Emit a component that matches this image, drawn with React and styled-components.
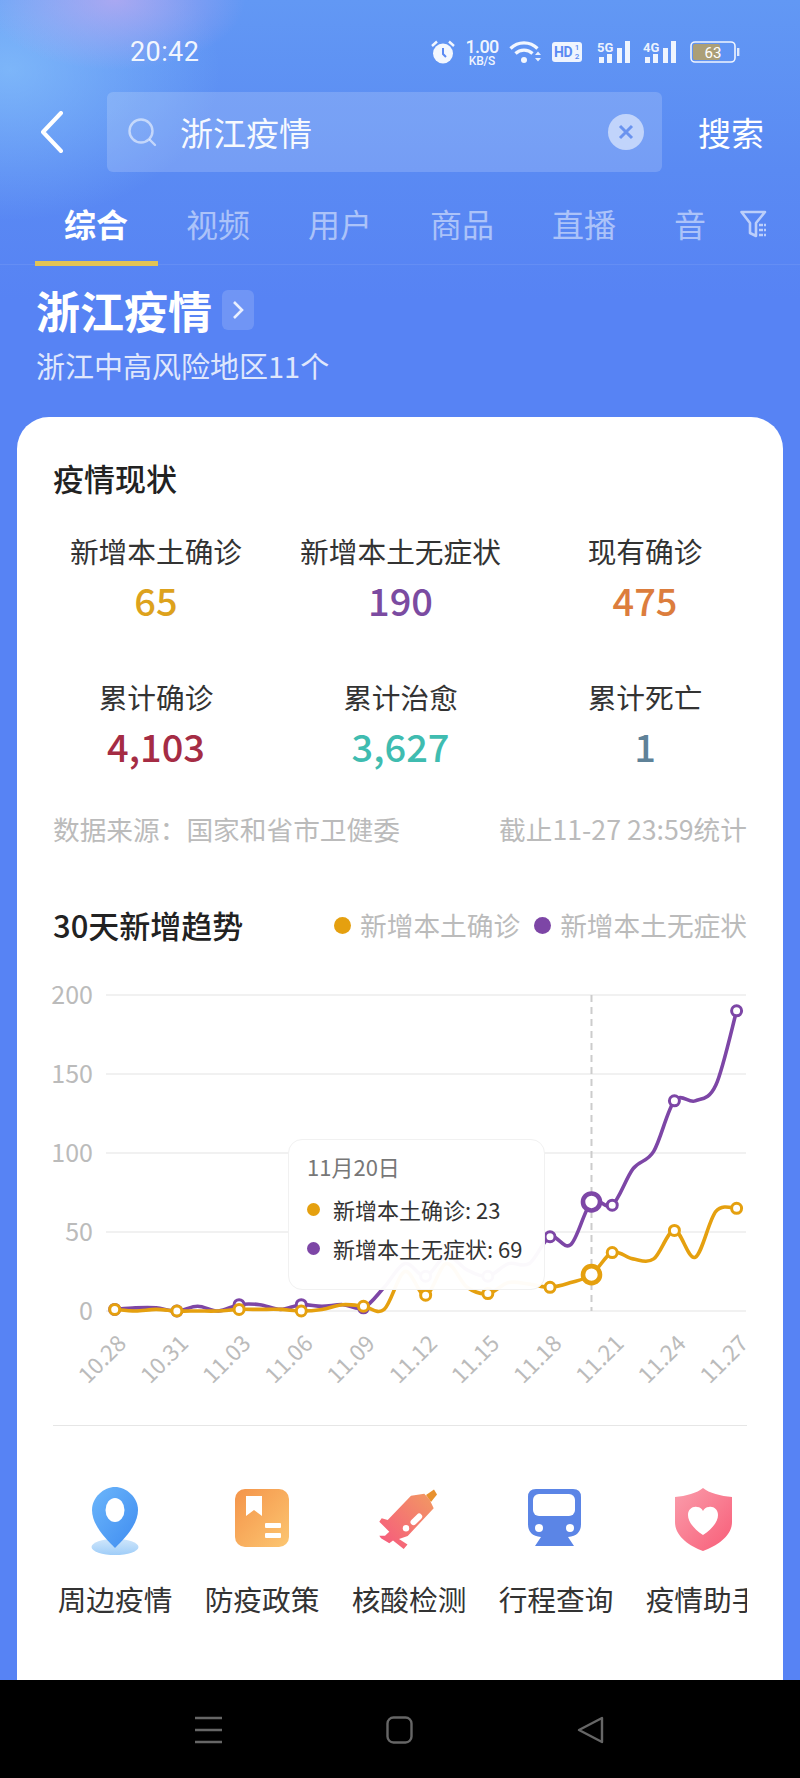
import React from 'react';
import styled, { createGlobalStyle } from 'styled-components';

const GlobalStyle = createGlobalStyle`
  html, body { margin: 0; padding: 0; background: #000; }
  * { box-sizing: border-box; }
  body { font-family: "Noto Sans CJK SC", "Noto Sans", sans-serif; }
`;

const Page = styled.div`
  width: 800px;
  height: 1778px;
  display: flex;
  flex-direction: column;
  overflow: hidden;
`;

const Screen = styled.div`
  flex: 1;
  min-height: 0;
  overflow: hidden;
  background:
    radial-gradient(ellipse 130px 70px at 115px 0px, rgba(190, 170, 240, 0.75), rgba(190, 170, 240, 0) 100%),
    radial-gradient(ellipse 210px 150px at 10px 70px, rgba(140, 200, 252, 0.65), rgba(140, 200, 252, 0) 100%),
    linear-gradient(180deg, #6298f4 0%, #5a8af3 170px, #5783f4 300px, #5783f4 100%);
`;

/* status bar */
const StatusBar = styled.div`
  height: 92px;
  padding: 12px 60px 0 130px;
  display: flex;
  align-items: center;
  color: rgba(255, 255, 255, 0.92);
`;

const Time = styled.div`
  font-family: Roboto, sans-serif;
  font-size: 27px;
  letter-spacing: 0.4px;
`;

const StatusIcons = styled.div`
  margin-left: auto;
  display: flex;
  align-items: center;
  gap: 10px;
`;

const Speed = styled.div`
  width: 34px;
  display: flex;
  flex-direction: column;
  align-items: center;
  font-family: Roboto, sans-serif;
  font-weight: 500;
  b {
    font-size: 18px;
    line-height: 17px;
    font-weight: 500;
    letter-spacing: -0.7px;
  }
  span {
    font-size: 12px;
    line-height: 12px;
    letter-spacing: -0.2px;
  }
`;

const HdBadge = styled.div`
  position: relative;
  width: 30px;
  height: 20px;
  border-radius: 3px;
  background: rgba(255, 255, 255, 0.9);
  color: #5a8af3;
  font-family: Roboto, sans-serif;
  font-weight: 700;
  font-size: 14px;
  line-height: 20px;
  padding-left: 2px;
  letter-spacing: -0.5px;
  span {
    position: absolute;
    right: 2px;
    top: 1px;
    width: 6px;
    font-size: 8px;
    line-height: 9px;
    font-weight: 500;
    text-align: center;
    letter-spacing: 0;
  }
`;

const SignalSvg = styled.svg`
  display: block;
  width: 35px;
  height: 24px;
  margin-left: ${(p) => p.$gap}px;
`;

const BatterySvg = styled.svg`
  display: block;
  width: 50px;
  height: 22px;
  margin-left: 2px;
`;

/* search */
const SearchRow = styled.div`
  height: 80px;
  padding-left: 40px;
  display: flex;
  align-items: center;
`;

const BackIcon = styled.svg`
  width: 24px;
  height: 42px;
  margin-right: 43px;
  flex: none;
`;

const SearchBox = styled.div`
  width: 555px;
  height: 80px;
  border-radius: 6px;
  background: rgba(255, 255, 255, 0.17);
  display: flex;
  align-items: center;
  padding: 0 18px 0 21px;
`;

const SearchText = styled.div`
  flex: 1;
  margin-left: 23px;
  font-size: 33px;
  color: rgba(255, 255, 255, 0.95);
`;

const SearchButton = styled.div`
  margin-left: 36px;
  font-size: 33px;
  color: #fff;
`;

/* tabs */
const TabBar = styled.div`
  height: 93px;
  padding: 29px 33px 0 64px;
  display: flex;
  justify-content: space-between;
  align-items: flex-start;
  border-bottom: 1px solid rgba(255, 255, 255, 0.08);
`;

const TabList = styled.div`
  display: flex;
  gap: 58px;
`;

const Tab = styled.div`
  position: relative;
  font-size: 32px;
  line-height: 44px;
  font-weight: ${(p) => (p.$active ? 700 : 400)};
  color: ${(p) => (p.$active ? '#fff' : 'rgba(255, 255, 255, 0.5)')};
  ${(p) =>
    p.$active &&
    `&::after {
      content: '';
      position: absolute;
      left: -29px;
      right: -30px;
      top: 60px;
      height: 5px;
      background: #e2c455;
    }`}
`;

const FilterIcon = styled.svg`
  display: block;
  width: 27px;
  height: 30px;
  margin-top: 9px;
`;

/* heading */
const TitleRow = styled.div`
  margin-top: 17px;
  padding-left: 36px;
  height: 56px;
  display: flex;
  align-items: center;
  gap: 10px;
`;

const Title = styled.h1`
  margin: 0;
  font-size: 44px;
  line-height: 56px;
  font-weight: 700;
  color: #fff;
`;

const TitleArrow = styled.div`
  width: 32px;
  height: 40px;
  border-radius: 6px;
  background: rgba(255, 255, 255, 0.15);
  display: flex;
  align-items: center;
  justify-content: center;
`;

const Subtitle = styled.div`
  margin-top: 7px;
  padding-left: 36px;
  font-size: 29px;
  line-height: 40px;
  color: rgba(255, 255, 255, 0.82);
`;

/* card */
const Card = styled.div`
  margin: 32px 17px 0;
  padding: 41px 36px 0;
  height: 1263px;
  background: #fff;
  border-radius: 32px 32px 0 0;
`;

const SectionTitle = styled.div`
  font-size: ${(p) => p.$size}px;
  line-height: 40px;
  font-weight: 500;
  color: #222;
`;

const StatGrid = styled.div`
  margin-top: 33px;
  display: grid;
  grid-template-columns: repeat(3, 206px);
  column-gap: 38.5px;
  row-gap: 52px;
`;

const Stat = styled.div`
  display: flex;
  flex-direction: column;
  align-items: center;
  white-space: nowrap;
`;

const StatLabel = styled.div`
  font-size: 28.7px;
  line-height: 40px;
  color: #333;
`;

const StatValue = styled.div`
  margin-top: 4px;
  font-size: 38px;
  line-height: 50px;
  font-weight: 500;
  color: ${(p) => p.$color};
`;

const SourceRow = styled.div`
  margin-top: 40px;
  display: flex;
  justify-content: space-between;
  font-size: 26.7px;
  line-height: 36px;
  color: #bbb;
  white-space: nowrap;
`;

const TrendHead = styled.div`
  margin-top: 58px;
  display: flex;
  align-items: center;
  justify-content: space-between;
`;

const Legend = styled.div`
  display: flex;
  gap: 14px;
`;

const LegendItem = styled.div`
  display: flex;
  align-items: center;
  gap: 9px;
  font-size: 26.7px;
  line-height: 36px;
  color: #bbb;
  white-space: nowrap;
`;

const Dot = styled.i`
  display: block;
  flex: none;
  width: ${(p) => p.$size}px;
  height: ${(p) => p.$size}px;
  border-radius: 50%;
  background: ${(p) => p.$color};
`;

const ChartWrap = styled.div`
  position: relative;
  margin-top: 25px;
  height: 430px;
`;

const ChartSvg = styled.svg`
  display: block;
  width: 694px;
  height: 430px;
  overflow: visible;
  font-family: "Noto Sans CJK SC", sans-serif;
`;

const Tooltip = styled.div`
  position: absolute;
  left: 235px;
  top: 169px;
  width: 257px;
  height: 151px;
  padding: 11px 0 0 18px;
  border: 1px solid #f1f1f1;
  border-radius: 14px;
  background: rgba(255, 255, 255, 0.97);
`;

const TipDate = styled.div`
  font-size: 22px;
  line-height: 30px;
  color: #777;
`;

const TipRow = styled.div`
  margin-top: ${(p) => p.$gap}px;
  display: flex;
  align-items: center;
  gap: 13px;
  font-size: 22px;
  line-height: 30px;
  color: #333;
  white-space: nowrap;
`;

const Divider = styled.div`
  margin-top: 25px;
  height: 1px;
  background: #e6e6e6;
`;

const Shortcuts = styled.div`
  margin-top: 60px;
  padding-left: 4px;
  display: flex;
  gap: 31px;
  overflow: hidden;
`;

const Shortcut = styled.div`
  flex: none;
  width: 116px;
  display: flex;
  flex-direction: column;
  align-items: center;
`;

const ShortcutIcon = styled.svg`
  width: 68px;
  height: 70px;
  display: block;
`;

const ShortcutLabel = styled.div`
  margin-top: 23px;
  font-size: 28.7px;
  line-height: 40px;
  color: #333;
  white-space: nowrap;
`;

/* nav */
const NavBar = styled.div`
  flex: none;
  height: 98px;
  background: #000;
  display: grid;
  grid-template-columns: 27px 27px 27px;
  column-gap: 164px;
  padding: 36px 0 0 195px;
`;

const NavIcon = styled.svg`
  width: 27px;
  height: 28px;
  display: block;
`;

const ORANGE = '#e5a00f';
const PURPLE = '#7d46a6';

const purpleData = [1, 2, 2, 0, 3, 0, 4, 4, 1, 4, 3, 4, 2, 15, 30, 22, 35, 26, 22, 30, 30, 47, 42, 69, 67, 90, 101, 133, 133, 143, 190];
const orangeData = [1, 0, 1, 0, 0, 0, 1, 1, 1, 0, 1, 4, 3, 1, 25, 10, 30, 15, 11, 18, 17, 15, 18, 23, 37, 33, 33, 51, 34, 63, 65];
const xLabels = ['10.28', '10.31', '11.03', '11.06', '11.09', '11.12', '11.15', '11.18', '11.21', '11.24', '11.27'];

const px = (i) => 61.7 + i * 20.73;
const py = (v) => 341 - v * 1.58;

// 把数据点连成平滑曲线
function smoothPath(data) {
  const pts = data.map((v, i) => [px(i), py(v)]);
  let d = `M${pts[0][0]} ${pts[0][1]}`;
  for (let i = 0; i < pts.length - 1; i++) {
    const p0 = pts[Math.max(i - 1, 0)];
    const p1 = pts[i];
    const p2 = pts[i + 1];
    const p3 = pts[Math.min(i + 2, pts.length - 1)];
    const c1x = p1[0] + (p2[0] - p0[0]) / 6;
    const c1y = p1[1] + (p2[1] - p0[1]) / 6;
    const c2x = p2[0] - (p3[0] - p1[0]) / 6;
    const c2y = p2[1] - (p3[1] - p1[1]) / 6;
    d += ` C${c1x} ${c1y} ${c2x} ${c2y} ${p2[0]} ${p2[1]}`;
  }
  return d;
}

function Series({ data, color }) {
  return (
    <g>
      <path d={smoothPath(data)} fill="none" stroke={color} strokeWidth="3.6" />
      {data.map((v, i) =>
        i % 3 === 0 ? (
          <circle key={i} cx={px(i)} cy={py(v)} r="5" fill="#fff" stroke={color} strokeWidth="3" />
        ) : null
      )}
      <circle cx={px(23)} cy={py(data[23])} r="8.5" fill="#fff" stroke={color} strokeWidth="4.6" />
    </g>
  );
}

function Chart() {
  return (
    <ChartSvg viewBox="0 0 694 430">
      {[200, 150, 100, 50, 0].map((v) => (
        <g key={v}>
          <line x1="53" x2="693" y1={py(v)} y2={py(v)} stroke="#ececec" strokeWidth="1.5" />
          <text x="40" y={py(v) + 9} textAnchor="end" fontSize="25" fill="#bbb">
            {v}
          </text>
        </g>
      ))}
      <line x1={px(23)} x2={px(23)} y1={py(200)} y2={py(0)} stroke="#ccc" strokeWidth="2" strokeDasharray="7 5" />
      <Series data={purpleData} color={PURPLE} />
      <Series data={orangeData} color={ORANGE} />
      {xLabels.map((t, i) => (
        <text
          key={t}
          transform={`translate(${px(i * 3) + 13} ${375}) rotate(-45)`}
          textAnchor="end"
          fontSize="22.5"
          fill="#bbb"
        >
          {t}
        </text>
      ))}
    </ChartSvg>
  );
}

function PinIcon() {
  return (
    <ShortcutIcon viewBox="0 0 68 70">
      <defs>
        <linearGradient id="pinG" x1="0" y1="0" x2="1" y2="1">
          <stop offset="0" stopColor="#6cb6fb" />
          <stop offset="1" stopColor="#3f8cf0" />
        </linearGradient>
        <linearGradient id="pinB" x1="0" y1="0" x2="0" y2="1">
          <stop offset="0" stopColor="#cfe6fb" />
          <stop offset="1" stopColor="#9fcdf8" />
        </linearGradient>
      </defs>
      <ellipse cx="34" cy="61" rx="23.5" ry="8" fill="url(#pinB)" />
      <path d="M34 1C23 1 11 11 11 24C11 39 25 53 34 62C43 53 57 39 57 24C57 11 45 1 34 1Z" fill="url(#pinG)" />
      <ellipse cx="34" cy="24" rx="9.5" ry="12" fill="#fff" />
    </ShortcutIcon>
  );
}

function BookIcon() {
  return (
    <ShortcutIcon viewBox="0 0 68 70">
      <defs>
        <linearGradient id="bookG" x1="0" y1="0" x2="1" y2="1">
          <stop offset="0" stopColor="#f4944a" />
          <stop offset="1" stopColor="#fcc671" />
        </linearGradient>
      </defs>
      <rect x="7" y="3" width="54" height="58" rx="10" fill="url(#bookG)" />
      <path d="M18 10H34V30L26 24L18 30Z" fill="#fff" />
      <rect x="37" y="37" width="16" height="5" rx="1" fill="#fff" />
      <rect x="37" y="47" width="16" height="5" rx="1" fill="#fff" />
    </ShortcutIcon>
  );
}

function SyringeIcon() {
  return (
    <ShortcutIcon viewBox="0 0 68 70">
      <defs>
        <linearGradient id="syrG" x1="0" y1="1" x2="1" y2="0">
          <stop offset="0" stopColor="#f6577f" />
          <stop offset="1" stopColor="#f29a62" />
        </linearGradient>
      </defs>
      <path d="M51 9L59 3.5L62 8.5L56 16Z" fill="#e8912e" />
      <path
        d="M36 9.7L49.3 7.7L54.3 13L58.7 22.3L32.7 50L24 53L32.5 58.5L28.7 63L18 54.5L14.3 57.3L6 52.3L4.3 49.7L10 49.7L14.3 45.7L4.3 35.7L6.7 32.3L12.7 34Z"
        fill="url(#syrG)"
      />
      <rect x="34" y="30.5" width="14" height="6" rx="3" transform="rotate(-45 41 33)" fill="#fff" />
      <circle cx="31" cy="42.3" r="3.2" fill="#fff" />
    </ShortcutIcon>
  );
}

function TrainIcon() {
  return (
    <ShortcutIcon viewBox="0 0 68 70">
      <path d="M14 3H51Q59 3 59 11V38Q59 50 46 51L52 60H13L19 51Q6 50 6 38V11Q6 3 14 3Z" fill="#5b85e6" />
      <rect x="11" y="8" width="42" height="22" rx="6" fill="#fff" />
      <circle cx="17" cy="42" r="4" fill="#fff" />
      <circle cx="48" cy="42" r="4" fill="#fff" />
    </ShortcutIcon>
  );
}

function ShieldIcon() {
  return (
    <ShortcutIcon viewBox="0 0 68 70">
      <defs>
        <linearGradient id="shG" x1="0" y1="0" x2="1" y2="1">
          <stop offset="0" stopColor="#fa9dab" />
          <stop offset="1" stopColor="#f85d78" />
        </linearGradient>
      </defs>
      <path d="M34 2C40 7 52 10 63 11V36C63 50 48 60 34 65C20 60 6 50 6 36V11C17 10 28 7 34 2Z" fill="url(#shG)" />
      <path d="M34 49C25 43 19 36 19 29C19 23 24 20 28 21C31 21 33 23 34 25C35 23 37 21 40 21C44 20 49 23 49 29C49 36 43 43 34 49Z" fill="#fff" />
    </ShortcutIcon>
  );
}

function Signal({ label, gap }) {
  const fill = 'rgba(255,255,255,.9)';
  return (
    <SignalSvg viewBox="0 0 35 24" $gap={gap}>
      <text x="0" y="12" fontSize="13" fontWeight="700" fontFamily="Roboto, sans-serif" fill={fill}>
        {label}
      </text>
      <rect x="2" y="17" width="5" height="6" fill={fill} />
      <rect x="10" y="14" width="5" height="9" fill={fill} />
      <rect x="20" y="8" width="5" height="15" fill={fill} />
      <rect x="28" y="1" width="5" height="22" fill={fill} />
    </SignalSvg>
  );
}

const stats = [
  { label: '新增本土确诊', value: '65', color: '#dda21d' },
  { label: '新增本土无症状', value: '190', color: '#7b4ba1' },
  { label: '现有确诊', value: '475', color: '#dc7d3d' },
  { label: '累计确诊', value: '4,103', color: '#a52c44' },
  { label: '累计治愈', value: '3,627', color: '#3fbcb0' },
  { label: '累计死亡', value: '1', color: '#5f8298' },
];

const shortcuts = [
  { label: '周边疫情', Icon: PinIcon },
  { label: '防疫政策', Icon: BookIcon },
  { label: '核酸检测', Icon: SyringeIcon },
  { label: '行程查询', Icon: TrainIcon },
  { label: '疫情助手', Icon: ShieldIcon },
];

export default function App() {
  return (
    <Page>
      <GlobalStyle />
      <Screen>
        <StatusBar>
          <Time>20:42</Time>
          <StatusIcons>
            <svg width="24" height="24" viewBox="0 0 24 24">
              <circle cx="12" cy="13.5" r="10" fill="rgba(255,255,255,.92)" />
              <path d="M12 8V14L15 17" fill="none" stroke="#5a8af3" strokeWidth="2" />
              <path d="M1 6L6 1.5M23 6L18 1.5" stroke="rgba(255,255,255,.92)" strokeWidth="2.4" />
            </svg>
            <Speed>
              <b>1.00</b>
              <span>KB/S</span>
            </Speed>
            <svg width="33" height="24" viewBox="0 0 33 24">
              <g fill="none" stroke="rgba(255,255,255,.92)" strokeWidth="3.2">
                <path d="M1.5 8.5C9 1 21 1 28.5 8.5" />
                <path d="M6.5 13.5C11 9 19 9 23.5 13.5" />
              </g>
              <circle cx="15" cy="20" r="3" fill="rgba(255,255,255,.92)" />
              <path d="M26 15L29 11.5L32 15ZM26 18L29 21.5L32 18Z" fill="rgba(255,255,255,.85)" />
            </svg>
            <HdBadge>
              HD
              <span>1 2</span>
            </HdBadge>
            <Signal label="5G" gap={5} />
            <Signal label="4G" gap={1} />
            <BatterySvg viewBox="0 0 50 22">
              <rect x="1" y="1" width="44" height="20" rx="4" fill="none" stroke="rgba(255,255,255,.9)" strokeWidth="1.6" />
              <rect x="3" y="3" width="27" height="16" rx="2" fill="#ab9f77" />
              <rect x="47" y="7" width="2.4" height="8" fill="rgba(255,255,255,.8)" />
              <text x="23" y="17" textAnchor="middle" fontSize="15" fontFamily="Roboto, sans-serif" fill="#fff">
                63
              </text>
            </BatterySvg>
          </StatusIcons>
        </StatusBar>

        <SearchRow>
          <BackIcon viewBox="0 0 24 42">
            <path d="M21 2L3 21L21 40" fill="none" stroke="#fff" strokeWidth="4" strokeLinecap="round" strokeLinejoin="round" />
          </BackIcon>
          <SearchBox>
            <svg width="29" height="29" viewBox="0 0 29 29">
              <circle cx="13" cy="13" r="11.5" fill="none" stroke="rgba(255,255,255,.55)" strokeWidth="2.4" />
              <path d="M22 22L27 27" stroke="rgba(255,255,255,.55)" strokeWidth="2.4" strokeLinecap="round" />
            </svg>
            <SearchText>浙江疫情</SearchText>
            <svg width="36" height="36" viewBox="0 0 36 36">
              <circle cx="18" cy="18" r="18" fill="rgba(255,255,255,.55)" />
              <path d="M12 12L24 24M24 12L12 24" stroke="#6a93ef" strokeWidth="3" />
            </svg>
          </SearchBox>
          <SearchButton>搜索</SearchButton>
        </SearchRow>

        <TabBar>
          <TabList>
            <Tab $active>综合</Tab>
            <Tab>视频</Tab>
            <Tab>用户</Tab>
            <Tab>商品</Tab>
            <Tab>直播</Tab>
            <Tab>音</Tab>
          </TabList>
          <FilterIcon viewBox="0 0 27 30">
            <path d="M1.5 2H25L16 13V26L10 23V13Z" fill="none" stroke="rgba(255,255,255,.6)" strokeWidth="2.6" strokeLinejoin="round" />
            <path d="M19 15H26M19 20H26M19 25H26" stroke="rgba(255,255,255,.6)" strokeWidth="2.4" strokeDasharray="4 1" />
          </FilterIcon>
        </TabBar>

        <TitleRow>
          <Title>浙江疫情</Title>
          <TitleArrow>
            <svg width="12" height="20" viewBox="0 0 12 20">
              <path d="M2 2L10 10L2 18" fill="none" stroke="rgba(255,255,255,.85)" strokeWidth="2.6" />
            </svg>
          </TitleArrow>
        </TitleRow>
        <Subtitle>浙江中高风险地区11个</Subtitle>

        <Card>
          <SectionTitle $size={31}>疫情现状</SectionTitle>
          <StatGrid>
            {stats.map((s) => (
              <Stat key={s.label}>
                <StatLabel>{s.label}</StatLabel>
                <StatValue $color={s.color}>{s.value}</StatValue>
              </Stat>
            ))}
          </StatGrid>
          <SourceRow>
            <span>数据来源：国家和省市卫健委</span>
            <span>截止11-27 23:59统计</span>
          </SourceRow>

          <TrendHead>
            <SectionTitle $size={31}>30天新增趋势</SectionTitle>
            <Legend>
              <LegendItem>
                <Dot $size={17} $color={ORANGE} />
                新增本土确诊
              </LegendItem>
              <LegendItem>
                <Dot $size={17} $color={PURPLE} />
                新增本土无症状
              </LegendItem>
            </Legend>
          </TrendHead>

          <ChartWrap>
            <Chart />
            <Tooltip>
              <TipDate>11月20日</TipDate>
              <TipRow $gap={13}>
                <Dot $size={13} $color={ORANGE} />
                新增本土确诊: 23
              </TipRow>
              <TipRow $gap={9}>
                <Dot $size={13} $color={PURPLE} />
                新增本土无症状: 69
              </TipRow>
            </Tooltip>
          </ChartWrap>

          <Divider />

          <Shortcuts>
            {shortcuts.map(({ label, Icon }) => (
              <Shortcut key={label}>
                <Icon />
                <ShortcutLabel>{label}</ShortcutLabel>
              </Shortcut>
            ))}
          </Shortcuts>
        </Card>
      </Screen>

      <NavBar>
        <NavIcon viewBox="0 0 27 28">
          <path d="M0 2H27M0 14H27M0 26H27" stroke="#666" strokeWidth="2.4" />
        </NavIcon>
        <NavIcon viewBox="0 0 27 28">
          <rect x="1.5" y="1.5" width="24" height="25" rx="6" fill="none" stroke="#666" strokeWidth="2.4" />
        </NavIcon>
        <NavIcon viewBox="0 0 27 28">
          <path d="M25 2V26L2 14Z" fill="none" stroke="#666" strokeWidth="2.4" strokeLinejoin="round" />
        </NavIcon>
      </NavBar>
    </Page>
  );
}
